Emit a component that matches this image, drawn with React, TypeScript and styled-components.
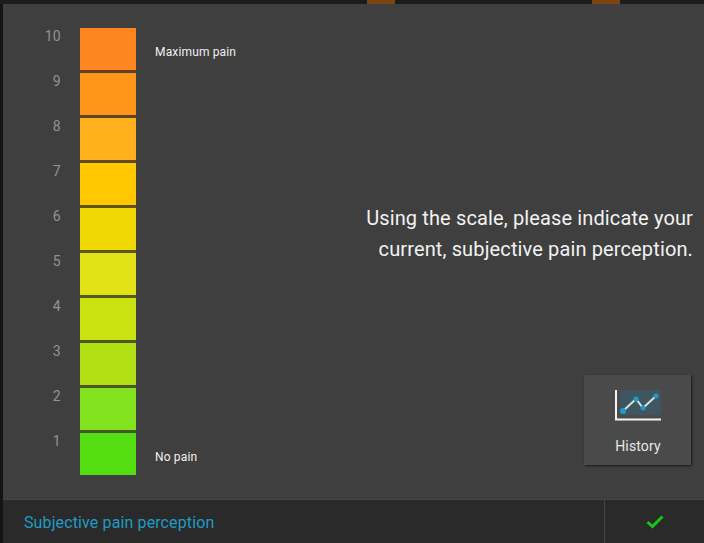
import React from "react";
import styled, { createGlobalStyle } from "styled-components";

const GlobalStyle = createGlobalStyle`
    html, body {
        margin: 0;
        padding: 0;
        background-color: #141414;
    }
    * {
        box-sizing: border-box;
    }
`;

const Screen = styled.div`
    width: 704px;
    height: 543px;
    overflow: hidden;
    display: flex;
    flex-direction: column;
    background-color: #141414;
    font-family: Roboto, "Liberation Sans", sans-serif;
`;

const BackdropStrip = styled.div`
    height: 4px;
    flex: none;
    display: flex;
    padding-left: 367px;
    gap: 197px;
    background-color: #1c1c1c;
`;

const BackdropTab = styled.div`
    width: 28px;
    height: 4px;
    background-color: #7d4413;
`;

const Dialog = styled.div`
    flex: 1;
    margin-left: 3px;
    display: flex;
    flex-direction: column;
    background-color: #3f3f3f;
    min-height: 0;
`;

const Body = styled.div`
    flex: 1;
    display: flex;
    min-height: 0;
    padding: 24px 11px 0 0;
`;

const Scale = styled.div`
    flex: none;
    width: 133px;
    display: flex;
    flex-direction: column;
    gap: 3px;
`;

const ScaleRow = styled.div`
    height: 42px;
    display: flex;
    align-items: flex-start;

    &:last-child > div {
        box-shadow: none;
    }
`;

const ScaleNumber = styled.span`
    width: 58px;
    flex: none;
    text-align: right;
    font-size: 14px;
    line-height: 16px;
    letter-spacing: 0.3px;
    color: #939393;
`;

const ScaleBar = styled.div<{ $color: string }>`
    margin-left: 19px;
    width: 56px;
    height: 42px;
    background-color: ${(props) => props.$color};
    box-shadow: 0 3px 0 color-mix(in srgb, ${(props) => props.$color} 25%, #2a2a2a);
`;

const ScaleLabels = styled.div`
    flex: none;
    width: 120px;
    height: 447px;
    padding: 17px 0 10px 19px;
    display: flex;
    flex-direction: column;
    justify-content: space-between;
    font-size: 12px;
    line-height: 15px;
    letter-spacing: 0.15px;
    color: #f0f0f0;
`;

const Side = styled.div`
    flex: 1;
    display: flex;
    flex-direction: column;
    align-items: flex-end;
`;

const Instruction = styled.p`
    margin: 175px 0 0;
    text-align: right;
    white-space: nowrap;
    font-size: 20px;
    line-height: 31px;
    letter-spacing: 0.13px;
    color: #f2f2f2;
`;

const HistoryButton = styled.button`
    margin: 110px 2px 0 0;
    width: 107px;
    height: 90px;
    padding: 15px 0 0 1px;
    border: none;
    display: flex;
    flex-direction: column;
    align-items: center;
    gap: 17px;
    background-color: #4a4a4a;
    box-shadow: 1px 1px 2px rgba(0, 0, 0, 0.6);
    font-family: inherit;
    font-size: 14px;
    line-height: 16px;
    letter-spacing: 0.15px;
    color: #e8e8e8;
`;

const Footer = styled.div`
    height: 44px;
    flex: none;
    display: flex;
    background-color: #2a2a2a;
    border-top: 1px solid #474747;
`;

const FooterTitle = styled.div`
    flex: 1;
    display: flex;
    align-items: center;
    padding: 2px 0 0 21px;
    font-size: 16px;
    letter-spacing: 0.12px;
    color: #1f9cc4;
`;

const ConfirmButton = styled.div`
    width: 100px;
    display: flex;
    align-items: center;
    justify-content: center;
    border-left: 1px solid #444444;
`;

const levels = [
    { value: 10, color: "#ff851f" },
    { value: 9, color: "#ff961a" },
    { value: 8, color: "#ffb01c" },
    { value: 7, color: "#ffc800" },
    { value: 6, color: "#f1d802" },
    { value: 5, color: "#e3e216" },
    { value: 4, color: "#cbe212" },
    { value: 3, color: "#b0e013" },
    { value: 2, color: "#84e31f" },
    { value: 1, color: "#55de12" },
];

const HistoryIcon = () => (
    <svg width="46" height="31" viewBox="0 0 46 31">
        <rect x="5" y="0" width="41" height="25" fill="#3f5660" />
        <path d="M1 0V29.5H46" fill="none" stroke="#f4f4f4" strokeWidth="2" />
        <path d="M8 21L21 9L28 18L41 6" fill="none" stroke="#cfe3ea" strokeWidth="2" />
        <circle cx="8" cy="21" r="3" fill="#1f9cc4" />
        <circle cx="21" cy="9" r="2.5" fill="#1f9cc4" />
        <circle cx="28" cy="18" r="2.5" fill="#1f9cc4" />
        <circle cx="41" cy="6" r="2.5" fill="#1f9cc4" />
    </svg>
);

const CheckIcon = () => (
    <svg width="18" height="14" viewBox="0 0 18 14">
        <path d="M1.5 7L6.5 11.5L16.5 1.5" fill="none" stroke="#17c417" strokeWidth="3" />
    </svg>
);

const App: React.FC = () => {
    return (
        <Screen>
            <GlobalStyle />
            <BackdropStrip>
                <BackdropTab />
                <BackdropTab />
            </BackdropStrip>
            <Dialog>
                <Body>
                    <Scale>
                        {levels.map((level) => (
                            <ScaleRow key={level.value}>
                                <ScaleNumber>{level.value}</ScaleNumber>
                                <ScaleBar $color={level.color} />
                            </ScaleRow>
                        ))}
                    </Scale>
                    <ScaleLabels>
                        <span>Maximum pain</span>
                        <span>No pain</span>
                    </ScaleLabels>
                    <Side>
                        <Instruction>
                            Using the scale, please indicate your
                            <br />
                            current, subjective pain perception.
                        </Instruction>
                        <HistoryButton>
                            <HistoryIcon />
                            History
                        </HistoryButton>
                    </Side>
                </Body>
                <Footer>
                    <FooterTitle>Subjective pain perception</FooterTitle>
                    <ConfirmButton>
                        <CheckIcon />
                    </ConfirmButton>
                </Footer>
            </Dialog>
        </Screen>
    );
};

export default App;
